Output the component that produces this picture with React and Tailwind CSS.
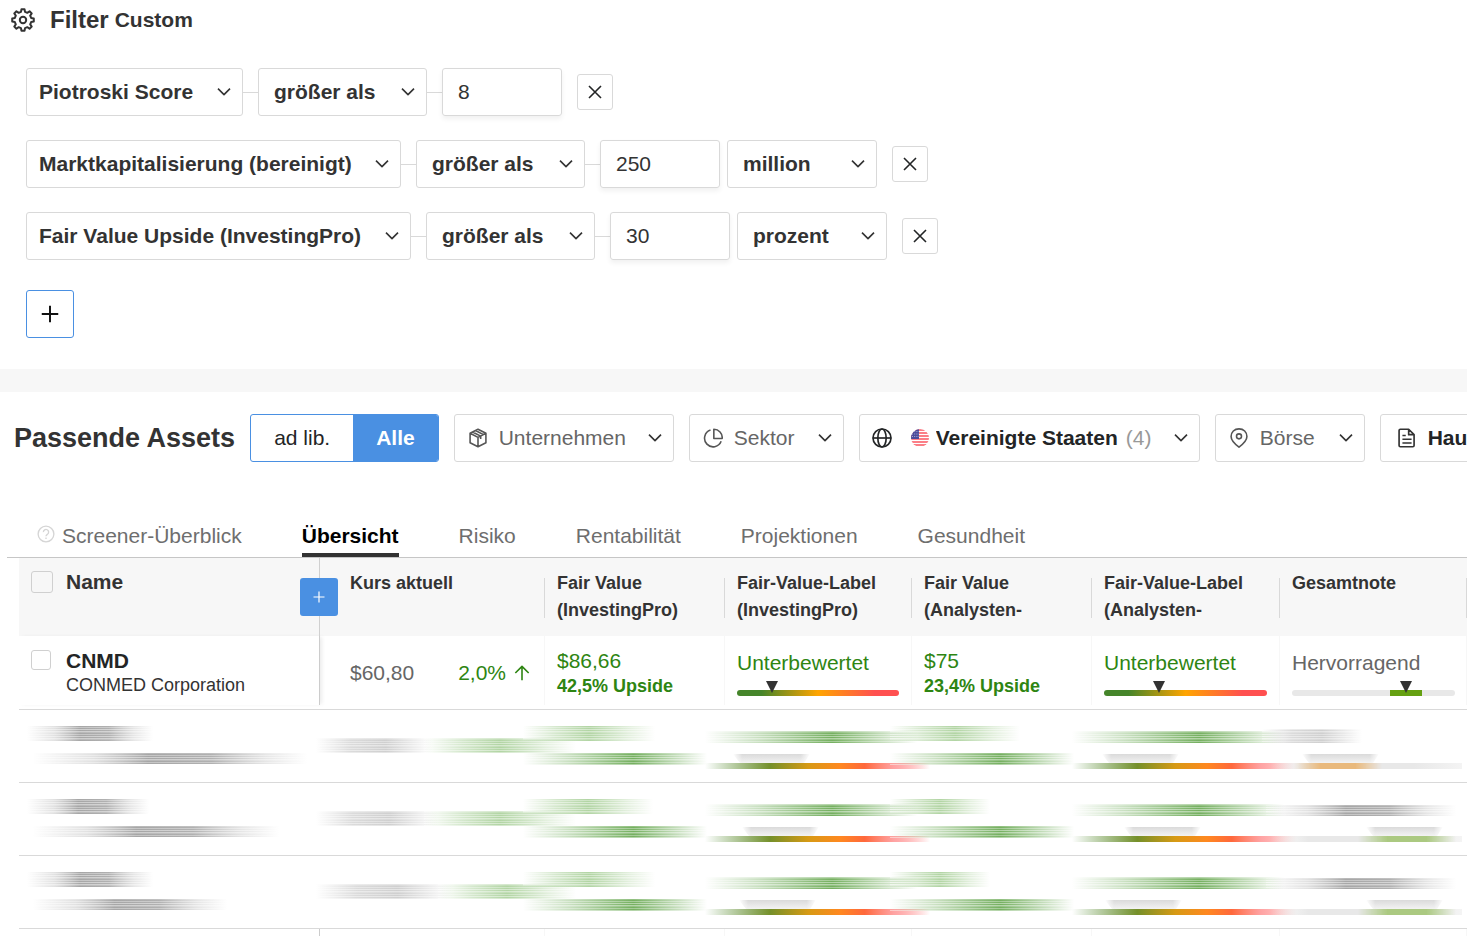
import React, { useState } from 'react';

const COLUMNS = [
  { key: 'price', title: 'Kurs aktuell' },
  { key: 'fv', title: 'Fair Value (InvestingPro)' },
  { key: 'fvLabel', title: 'Fair-Value-Label (InvestingPro)' },
  { key: 'analyst', title: 'Fair Value (Analysten-' },
  { key: 'analystLabel', title: 'Fair-Value-Label (Analysten-' },
  { key: 'grade', title: 'Gesamtnote' },
];

const TABS = ['Screener-Überblick', 'Übersicht', 'Risiko', 'Rentabilität', 'Projektionen', 'Gesundheit'];

const FILTERS = [
  { metric: 'Piotroski Score', value: '8' },
  { metric: 'Marktkapitalisierung (bereinigt)', value: '250', unit: 'million' },
  { metric: 'Fair Value Upside (InvestingPro)', value: '30', unit: 'prozent' },
];

// smears per locked row: [x, y, width, height, tone]
const LOCKED_ROWS = [
  {
    name: [[8, 16, 126, 15, 'ink'], [14, 43, 274, 11, 'ink']],
    price: [[-4, 28, 116, 15, 'gray'], [104, 28, 152, 15, 'lime']],
    fv: [[-22, 16, 132, 15, 'lime'], [-22, 43, 184, 12, 'green']],
    fvLabel: 10,
    analyst: [[-22, 16, 130, 15, 'lime'], [-22, 43, 184, 12, 'green']],
    analystLabel: 12,
    grade: [[-18, 19, 100, 14, 'gray']],
    gradeMark: [24, 14, 88, '#e9b97c'],
  },
  {
    name: [[8, 16, 122, 15, 'ink'], [14, 43, 246, 11, 'ink']],
    price: [[-4, 28, 122, 15, 'gray'], [104, 28, 152, 15, 'lime']],
    fv: [[-22, 16, 130, 15, 'lime'], [-22, 43, 184, 12, 'green']],
    fvLabel: 19,
    analyst: [[-22, 16, 100, 15, 'lime'], [-22, 43, 184, 12, 'green']],
    analystLabel: 34,
    grade: [[-14, 22, 190, 11, 'ink']],
    gradeMark: [88, 78, 98, '#abc981'],
  },
  {
    name: [[8, 16, 126, 15, 'ink'], [14, 43, 194, 11, 'ink']],
    price: [[-4, 28, 136, 15, 'gray'], [118, 28, 138, 15, 'lime']],
    fv: [[-22, 16, 132, 15, 'lime'], [-22, 43, 184, 12, 'green']],
    fvLabel: 16,
    analyst: [[-22, 16, 100, 15, 'lime'], [-22, 43, 184, 12, 'green']],
    analystLabel: 15,
    grade: [[-14, 22, 190, 11, 'ink']],
    gradeMark: [88, 78, 98, '#abc981'],
  },
];

const TONES = {
  ink: 'url(#smear-ink)',
  gray: 'url(#smear-gray)',
  lime: 'url(#smear-lime)',
  green: 'url(#smear-green)',
};

// eight teeth, the first one pointing up
const GEAR_POINTS = Array.from({ length: 8 }, (_, i) => i * 45)
  .flatMap((a) => [[a - 14, 8.4], [a - 8, 10.9], [a + 8, 10.9], [a + 14, 8.4]])
  .map(([deg, r]) => {
    const rad = ((deg - 90) * Math.PI) / 180;
    return `${(12 + r * Math.cos(rad)).toFixed(2)},${(12 + r * Math.sin(rad)).toFixed(2)}`;
  })
  .join(' ');

const Icon = ({ size = 20, className = '', width = 1.8, children }) => (
  <svg
    width={size}
    height={size}
    viewBox="0 0 24 24"
    fill="none"
    stroke="currentColor"
    strokeWidth={width}
    strokeLinejoin="round"
    className={`shrink-0 ${className}`}
    aria-hidden="true"
  >
    {children}
  </svg>
);

const Chevron = () => (
  <Icon size={16} width={2.4} className="text-[#333]">
    <path d="M3 7l9 9 9-9" />
  </Icon>
);

const GearIcon = () => (
  <Icon size={24} width={2} className="text-[#333]">
    <circle cx="12" cy="12" r="3.2" />
    <polygon points={GEAR_POINTS} />
  </Icon>
);

const BoxIcon = () => (
  <Icon width={1.9}>
    <path d="M12 1.500l9.500 4.800v11.400L12 22.500l-9.500-4.800V6.300zM2.500 6.300L12 11.200l9.500-4.900M12 11.200v11.300M5.500 4.800l9.700 5v3.400M9 3l9.500 5" />
  </Icon>
);

const PieIcon = () => (
  <Icon width={1.9}>
    <path d="M9 2.500A10.300 10.300 0 1 0 21.800 16M13 1.500v11h10A10 10 0 0 0 13 1.500z" />
  </Icon>
);

const GlobeIcon = () => (
  <Icon width={2} className="text-[#232526]">
    <circle cx="12" cy="12" r="10.8" />
    <ellipse cx="12" cy="12" rx="5" ry="10.8" />
    <path d="M1 12h22" />
  </Icon>
);

const PinIcon = () => (
  <Icon width={1.9}>
    <path d="M12 1c5.500 0 9.500 4 9.500 9.200 0 5-4.500 9-9.500 12.800-5-3.800-9.500-7.800-9.500-12.800C2.500 5 6.500 1 12 1z" />
    <circle cx="12" cy="10" r="3" />
  </Icon>
);

const DocIcon = () => (
  <Icon width={2} className="text-[#333]">
    <path d="M4 1.500h10l6.500 6.500v13a1.500 1.500 0 0 1-1.500 1.500H4A1.500 1.500 0 0 1 2.500 21V3A1.500 1.500 0 0 1 4 1.500zM14 1.500V8h6.500M6.500 9h4M6.500 13.500h11M6.500 18h11" />
  </Icon>
);

const FlagIcon = () => (
  <svg width="18" height="18" viewBox="0 0 18 18" className="ml-2 -mr-1 shrink-0" aria-hidden="true">
    <clipPath id="flag-clip">
      <circle cx="9" cy="9" r="9" />
    </clipPath>
    <g clipPath="url(#flag-clip)">
      <rect width="18" height="18" fill="#fff" />
      <path d="M0 1h18M0 4h18M0 7h18M0 10h18M0 13h18M0 16h18" stroke="#fa5560" strokeWidth="1.600" />
      <rect width="8" height="10" fill="#4a4c9c" />
      <path d="M1 2.500h7M1 5h7M1 7.500h7" stroke="#a9aad2" strokeWidth="1" strokeDasharray="1 1.200" />
    </g>
  </svg>
);

const Select = ({ label, value, className = '' }) => (
  <label
    className={`flex h-12 shrink-0 items-center gap-[22px] rounded-[3px] border border-[#d9d9d9] bg-white pr-[10px] ${className}`}
  >
    <select
      aria-label={label}
      defaultValue={value}
      className="appearance-none bg-transparent text-[21px] font-bold leading-[30px] text-[#333] outline-none"
    >
      <option>{value}</option>
    </select>
    <Chevron />
  </label>
);

const Connector = () => <span className="h-px w-[15px] shrink-0 bg-[#d9d9d9]" />;

const FilterRow = ({ metric, value, unit, onRemove }) => (
  <div className="flex h-12 items-center">
    <Select label="Kennzahl" value={metric} className="pl-3" />
    <Connector />
    <Select label="Vergleich" value="größer als" className="w-[169px] justify-between pl-[15px]" />
    <Connector />
    <input
      aria-label={`Wert für ${metric}`}
      defaultValue={value}
      className="h-12 w-[120px] rounded-[3px] border border-[#d9d9d9] px-[15px] text-[21px] text-[#333] shadow-[0_3px_5px_rgba(0,0,0,0.06)] outline-none"
    />
    {unit && <Select label="Einheit" value={unit} className="ml-[7px] w-[150px] justify-between pl-[15px]" />}
    <button
      onClick={onRemove}
      aria-label="Filter entfernen"
      className="ml-[15px] flex size-9 items-center justify-center rounded-[3px] border border-[#d9d9d9] text-[#232526]"
    >
      <Icon size={16} width={2.4}>
        <path d="M3 3l18 18M21 3L3 21" />
      </Icon>
    </button>
  </div>
);

const PickerSelect = ({ icon, label, flag, count, strong, className = '' }) => (
  <label
    className={`flex h-12 shrink-0 items-center gap-[11px] rounded-[3px] border border-[#d9d9d9] pr-[10px] text-[#555] ${className}`}
  >
    {icon}
    {flag}
    <select
      aria-label={label}
      className={`appearance-none bg-transparent text-[21px] leading-[30px] outline-none ${
        strong ? 'font-bold text-[#232526]' : 'text-[#666]'
      }`}
    >
      <option>{label}</option>
    </select>
    {count && <span className="-ml-1 text-[21px] text-[#999]">({count})</span>}
    <span className="ml-auto">
      <Chevron />
    </span>
  </label>
);

const Marker = ({ className }) => (
  <svg width="12" height="12" viewBox="0 0 12 12" className={`absolute -top-[9px] -ml-[6px] ${className}`} aria-hidden="true">
    <path d="M0 0h12L6 12z" fill="#333" />
  </svg>
);

const ValueLabel = ({ marker }) => (
  <div className="pr-3 pl-3">
    <div className="text-[21px] leading-[30px] text-[#2e8512]">Unterbewertet</div>
    <div className="relative mt-3 h-[6px] rounded-full bg-[linear-gradient(90deg,#45852a_0%,#45852a_15%,#ffa500_50%,#ff5050_85%,#ff5050_100%)]">
      <Marker className={marker} />
    </div>
  </div>
);

const FairValue = ({ price, upside }) => (
  <div className="pl-3 text-[#2e8512]">
    <div className="text-[21px] leading-[26px]">{price}</div>
    <div className="text-[18px] font-bold leading-6">{upside}</div>
  </div>
);

// cell whose hairline on the right stops short of the row border
const BodyCell = ({ children }) => (
  <td className="p-0 align-top">
    <div className="mb-1 flex h-[69px]">
      <div className="min-w-0 flex-1">{children}</div>
      <span className="w-px bg-[#f7f7f7]" />
    </div>
  </td>
);

const SmearDefs = () => (
  <svg width="0" height="0" className="absolute" aria-hidden="true">
    <defs>
      <linearGradient id="smear-ink">
        <stop offset="0" stopColor="#777" stopOpacity="0" />
        <stop offset=".22" stopColor="#777" stopOpacity=".22" />
        <stop offset=".42" stopColor="#555" stopOpacity=".52" />
        <stop offset=".65" stopColor="#555" stopOpacity=".46" />
        <stop offset=".85" stopColor="#777" stopOpacity=".18" />
        <stop offset="1" stopColor="#777" stopOpacity="0" />
      </linearGradient>
      <linearGradient id="smear-gray">
        <stop offset="0" stopColor="#888" stopOpacity="0" />
        <stop offset=".3" stopColor="#888" stopOpacity=".3" />
        <stop offset=".6" stopColor="#888" stopOpacity=".4" />
        <stop offset="1" stopColor="#888" stopOpacity="0" />
      </linearGradient>
      <linearGradient id="smear-lime">
        <stop offset="0" stopColor="#4f9f2f" stopOpacity="0" />
        <stop offset=".25" stopColor="#4f9f2f" stopOpacity=".24" />
        <stop offset=".5" stopColor="#4f9f2f" stopOpacity=".44" />
        <stop offset=".8" stopColor="#4f9f2f" stopOpacity=".16" />
        <stop offset="1" stopColor="#4f9f2f" stopOpacity="0" />
      </linearGradient>
      <linearGradient id="smear-green">
        <stop offset="0" stopColor="#3f9122" stopOpacity="0" />
        <stop offset=".25" stopColor="#3f9122" stopOpacity=".28" />
        <stop offset=".6" stopColor="#3f9122" stopOpacity=".72" />
        <stop offset=".85" stopColor="#3f9122" stopOpacity=".28" />
        <stop offset="1" stopColor="#3f9122" stopOpacity="0" />
      </linearGradient>
      <linearGradient id="smear-scale">
        <stop offset="0" stopColor="#45852a" stopOpacity="0" />
        <stop offset=".29" stopColor="#75902a" />
        <stop offset=".46" stopColor="#d79a14" />
        <stop offset=".6" stopColor="#ff8820" />
        <stop offset=".71" stopColor="#ff683c" />
        <stop offset=".84" stopColor="#ff8c8c" stopOpacity=".8" />
        <stop offset="1" stopColor="#ff5050" stopOpacity="0" />
      </linearGradient>
      <linearGradient id="smear-marker" x1="0" y1="0" x2="0" y2="1">
        <stop offset="0" stopColor="#dadada" />
        <stop offset="1" stopColor="#f3f3f3" />
      </linearGradient>
      <linearGradient id="smear-track">
        <stop offset="0" stopColor="#e8e8e8" stopOpacity="0" />
        <stop offset=".2" stopColor="#e8e8e8" />
        <stop offset=".75" stopColor="#e8e8e8" />
        <stop offset="1" stopColor="#f4f4f4" />
      </linearGradient>
      <linearGradient id="smear-fade">
        <stop offset="0" stopColor="#fff" stopOpacity="0" />
        <stop offset=".12" stopColor="#fff" />
        <stop offset=".88" stopColor="#fff" />
        <stop offset="1" stopColor="#fff" stopOpacity="0" />
      </linearGradient>
      <linearGradient id="smear-fade-wide">
        <stop offset="0" stopColor="#fff" stopOpacity="0" />
        <stop offset=".3" stopColor="#fff" />
        <stop offset=".7" stopColor="#fff" />
        <stop offset="1" stopColor="#fff" stopOpacity="0" />
      </linearGradient>
      <mask id="smear-soft" maskContentUnits="objectBoundingBox">
        <rect width="1" height="1" fill="url(#smear-fade)" />
      </mask>
      <mask id="smear-ends" maskContentUnits="objectBoundingBox">
        <rect width="1" height="1" fill="url(#smear-fade-wide)" />
      </mask>
      <pattern id="smear-lines" width="400" height="7" patternUnits="userSpaceOnUse">
        <rect y="0" width="400" height="1" fill="#fff" fillOpacity=".45" />
        <rect y="1" width="400" height="1" fill="#fff" fillOpacity=".2" />
        <rect y="3" width="400" height="1" fill="#fff" fillOpacity=".35" />
        <rect y="5" width="400" height="1" fill="#fff" fillOpacity=".45" />
      </pattern>
    </defs>
  </svg>
);

const SmearMarker = ({ x }) => (
  <path d={`M${x - 2} 44h77l-6 9h-64z`} fill="url(#smear-marker)" mask="url(#smear-soft)" />
);

const Smears = ({ items, scale, mark }) => (
  <svg width="100%" height="72" className="block overflow-visible" aria-hidden="true">
    {items.map(([x, y, w, h, tone]) => (
      <g key={`${x}-${y}`}>
        <rect x={x} y={y} width={w} height={h} fill={TONES[tone]} />
        <rect x={x} y={y} width={w} height={h} fill="url(#smear-lines)" />
      </g>
    ))}
    {scale !== undefined && (
      <g>
        <SmearMarker x={scale} />
        <rect x="-20" y="53" width="225" height="6" fill="url(#smear-scale)" />
      </g>
    )}
    {mark && (
      <g>
        <rect x="-10" y="53" width="192" height="6" fill="url(#smear-track)" />
        <rect x={mark[1]} y="53" width={mark[2]} height="6" fill={mark[3]} mask="url(#smear-ends)" />
        <SmearMarker x={mark[0]} />
      </g>
    )}
  </svg>
);

const LockedRow = ({ row }) => (
  <tr className="border-b border-[#d9d9d9]">
    <td className="p-0">
      <Smears items={row.name} />
    </td>
    <td className="p-0">
      <Smears items={row.price} />
    </td>
    <td className="p-0">
      <Smears items={row.fv} />
    </td>
    <td className="p-0">
      <Smears items={[[-20, 21, 212, 12, 'green']]} scale={row.fvLabel} />
    </td>
    <td className="p-0">
      <Smears items={row.analyst} />
    </td>
    <td className="p-0">
      <Smears items={[[-20, 21, 212, 12, 'green']]} scale={row.analystLabel} />
    </td>
    <td className="p-0">
      <Smears items={row.grade} mark={row.gradeMark} />
    </td>
  </tr>
);

const CheckBox = ({ label, className }) => (
  <input
    type="checkbox"
    aria-label={label}
    className={`shrink-0 appearance-none rounded-[3px] border border-[#d0d0d0] checked:bg-[#4a90e2] ${className}`}
  />
);

const ResultTable = () => (
  <table className="w-full table-fixed border-collapse text-left">
    <colgroup>
      <col className="w-[301px]" />
      <col className="w-[225px]" />
      <col className="w-[180px]" />
      <col className="w-[187px]" />
      <col className="w-[180px]" />
      <col className="w-[188px]" />
      <col className="w-[187px]" />
    </colgroup>
    <thead className="bg-[#f7f7f7] text-[#333]">
      <tr>
        <th className="relative p-0">
          <div className="flex h-[78px] items-start border-r border-[#d0d0d0] pt-[10px] pl-3">
            <CheckBox label="Alle auswählen" className="mt-[3px] size-[22px]" />
            <span className="ml-[13px] text-[21px] leading-7">Name</span>
          </div>
          <button
            aria-label="Spalte hinzufügen"
            className="absolute top-5 -right-[18px] z-10 flex size-[38px] items-center justify-center rounded-[3px] bg-[#4a90e2] text-white"
          >
            <Icon size={12} width={2.4}>
              <path d="M12 1v22M1 12h22" />
            </Icon>
          </button>
        </th>
        {COLUMNS.map((col, i) => (
          <th key={col.key} className="p-0">
            <div className="flex h-[78px]">
              <span className={`min-w-0 flex-1 pt-3 text-[18px] leading-[27px] ${i === 0 ? 'pl-[30px]' : 'pl-3'}`}>
                {col.title}
              </span>
              <span className="mt-5 h-10 w-px bg-[#d9d9d9]" />
            </div>
          </th>
        ))}
      </tr>
    </thead>
    <tbody>
      <tr className="border-b border-[#d9d9d9]">
        <td className="p-0 align-top">
          <div className="mb-1 flex h-[69px] items-start border-r border-[#ccc] pt-3 pl-3 shadow-[3px_0_4px_-1px_rgba(0,0,0,0.08)]">
            <CheckBox label="CNMD auswählen" className="mt-[2px] size-5" />
            <div className="ml-[15px] text-[#333]">
              <div className="text-[21px] font-bold leading-[26px] text-[#232526]">CNMD</div>
              <div className="text-[18px] leading-[22px]">CONMED Corporation</div>
            </div>
          </div>
        </td>
        <BodyCell>
          <div className="flex items-center justify-between pt-[22px] pr-[14px] pl-[30px] text-[21px] leading-[30px]">
            <span className="text-[#666]">$60,80</span>
            <span className="flex items-center gap-2 text-[#2e8512]">
              2,0%
              <Icon size={16} width={2.4}>
                <path d="M12 23V2M2 12L12 2l10 10" />
              </Icon>
            </span>
          </div>
        </BodyCell>
        <BodyCell>
          <div className="pt-3">
            <FairValue price="$86,66" upside="42,5% Upside" />
          </div>
        </BodyCell>
        <BodyCell>
          <div className="pt-3">
            <ValueLabel marker="left-[21.5%]" />
          </div>
        </BodyCell>
        <BodyCell>
          <div className="pt-3">
            <FairValue price="$75" upside="23,4% Upside" />
          </div>
        </BodyCell>
        <BodyCell>
          <div className="pt-3">
            <ValueLabel marker="left-[34%]" />
          </div>
        </BodyCell>
        <BodyCell>
          <div className="pt-3 pr-[11px] pl-3">
            <div className="text-[21px] leading-[30px] text-[#666]">Hervorragend</div>
            <div className="relative mt-3 h-[6px] rounded-full bg-[linear-gradient(90deg,#e8e8e8_60%,#65a011_60%,#65a011_80%,#e8e8e8_80%)]">
              <Marker className="left-[70%]" />
            </div>
          </div>
        </BodyCell>
      </tr>
      {LOCKED_ROWS.map((row, i) => (
        <LockedRow key={i} row={row} />
      ))}
      <tr>
        <td className="p-0">
          <div className="h-[7px] border-r border-[#ccc]" />
        </td>
        {COLUMNS.map((col) => (
          <td key={col.key} className="p-0">
            <div className="h-[7px] border-r border-[#f7f7f7]" />
          </td>
        ))}
      </tr>
    </tbody>
  </table>
);

const App = () => {
  const [filters, setFilters] = useState(FILTERS);
  const [tab, setTab] = useState('Übersicht');
  const [mode, setMode] = useState('Alle');

  return (
    <div className="overflow-hidden bg-white font-['Liberation_Sans',Arial,sans-serif] text-[#333]">
      <section>
        <h2 className="flex items-center pt-1 pl-[11px] font-bold leading-8">
          <GearIcon />
          <span className="ml-[15px] text-[24px]">Filter</span>
          <span className="ml-[6px] text-[21px]">Custom</span>
        </h2>
        <div className="flex flex-col gap-6 pt-8 pl-[26px]">
          {filters.map((filter) => (
            <FilterRow
              key={filter.metric}
              {...filter}
              onRemove={() => setFilters((prev) => prev.filter((f) => f.metric !== filter.metric))}
            />
          ))}
        </div>
        <button
          aria-label="Filter hinzufügen"
          className="mt-[30px] mb-[31px] ml-[26px] flex size-12 items-center justify-center rounded-[3px] border border-[#4a90e2] text-[#111]"
        >
          <Icon size={18} width={2.6}>
            <path d="M12 1v22M1 12h22" />
          </Icon>
        </button>
      </section>

      <div className="h-[23px] bg-[#f7f7f7]" />

      <section>
        <div className="flex items-center gap-[15px] pt-[22px] pl-[14px]">
          <h2 className="shrink-0 text-[27px] font-bold leading-10">Passende Assets</h2>
          <div className="flex h-12 shrink-0 overflow-hidden rounded-[3px] border border-[#4a90e2] text-[21px]">
            {['ad lib.', 'Alle'].map((item) => (
              <button
                key={item}
                onClick={() => setMode(item)}
                className={`px-[23px] ${mode === item ? 'bg-[#4a90e2] font-bold text-white' : 'text-[#232526]'}`}
              >
                {item}
              </button>
            ))}
          </div>
          <PickerSelect icon={<BoxIcon />} label="Unternehmen" className="w-[220px] pl-[13px]" />
          <PickerSelect icon={<PieIcon />} label="Sektor" className="w-[155px] pl-[13px]" />
          <PickerSelect
            icon={<GlobeIcon />}
            flag={<FlagIcon />}
            label="Vereinigte Staaten"
            count={4}
            strong
            className="w-[341px] pl-3"
          />
          <PickerSelect icon={<PinIcon />} label="Börse" className="w-[150px] pl-[13px]" />
          <PickerSelect icon={<DocIcon />} label="Hauptlisting" strong className="w-[220px] pl-4" />
        </div>

        <nav className="mt-[58px] ml-[7px] flex gap-[60px] border-b border-[#c6c6c6] pl-[30px] text-[21px] leading-[31px]">
          {TABS.map((item, i) => (
            <button
              key={item}
              onClick={() => setTab(item)}
              className={`flex items-center border-b-4 pb-[2px] ${
                tab === item ? 'border-[#333] font-bold text-black' : 'border-transparent text-[#6e6e6e]'
              }`}
            >
              {i === 0 && (
                <Icon size={18} width={1.8} className="mr-[7px] mb-1 text-[#d5d5d5]">
                  <circle cx="12" cy="12" r="10.5" />
                  <path d="M8.500 9.500a3.500 3.500 0 1 1 5.500 2.800c-1.300.9-2 1.300-2 2.700M12 16.500v2" />
                </Icon>
              )}
              {item}
            </button>
          ))}
        </nav>

        <div className="pl-[19px]">
          <SmearDefs />
          <ResultTable />
        </div>
      </section>
    </div>
  );
};

export default App;
